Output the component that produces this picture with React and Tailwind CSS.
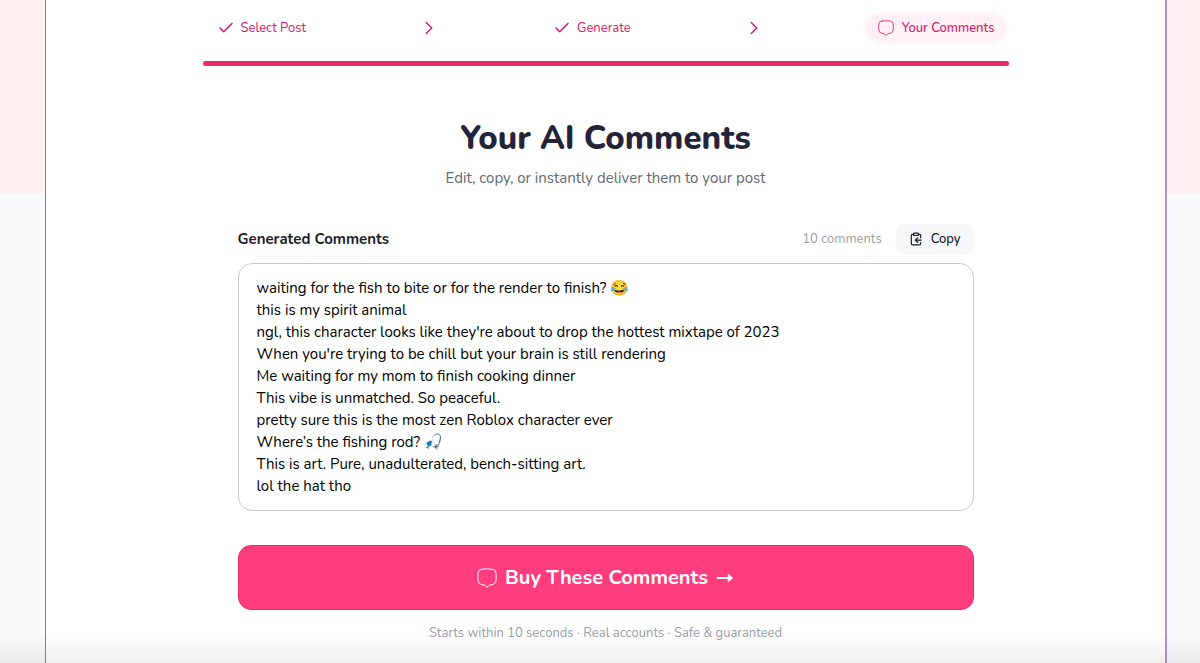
import { useState } from "react";
import { Check, ChevronRight, ClipboardCopy } from "lucide-react";

const COMMENTS = [
  "waiting for the fish to bite or for the render to finish? 😂",
  "this is my spirit animal",
  "ngl, this character looks like they're about to drop the hottest mixtape of 2023",
  "When you're trying to be chill but your brain is still rendering",
  "Me waiting for my mom to finish cooking dinner",
  "This vibe is unmatched. So peaceful.",
  "pretty sure this is the most zen Roblox character ever",
  "Where’s the fishing rod? 🎣",
  "This is art. Pure, unadulterated, bench-sitting art.",
  "lol the hat tho",
];

function CommentIcon({ className }) {
  return (
    <svg
      viewBox="0 0 20 20"
      fill="none"
      stroke="currentColor"
      strokeLinejoin="round"
      strokeLinecap="round"
      className={className}
      aria-hidden="true"
    >
      <path d="M5 1.2Q10 .6 15 1.2Q18.700 1.500 19 5Q19.400 9 19 12.500Q18.600 16.200 15.200 16.700L12.600 17L10 19.300L7.400 17L4.800 16.700Q1.400 16.200 1 12.500Q.6 9 1 5Q1.300 1.500 5 1.200Z" />
      <path d="M6 9h.1M10 9h.1M14 9h.1" opacity=".3" />
    </svg>
  );
}

function ArrowIcon() {
  return (
    <svg
      viewBox="0 0 18 14"
      fill="none"
      stroke="currentColor"
      strokeWidth="2"
      strokeLinejoin="round"
      strokeLinecap="round"
      className="h-[14px] w-[18px]"
      aria-hidden="true"
    >
      <path d="M1.500 7H15.500" />
      <path d="M12.500 3.500L16.500 7L12.500 10.500Z" fill="currentColor" strokeWidth="1" />
    </svg>
  );
}

function App() {
  const [comments, setComments] = useState(COMMENTS.join("\n"));

  const handleCopy = () => {
    navigator.clipboard.writeText(comments);
  };

  return (
    <div className="relative flex min-h-screen bg-[linear-gradient(to_bottom,#fff1f2_193px,#f8fafc_193px)] pl-[45px] pr-[33px] font-[Nunito,'Open_Sans',sans-serif] text-black">
      <div className="flex grow bg-linear-to-r from-[#d9588f] to-[#a99bcf] pl-px pr-[2px]">
        <main className="flex grow flex-col items-center bg-white pt-[14px]">
          <div className="w-full max-w-[806px]">
            <ol className="flex items-center justify-between pl-[2px] pr-[2px] text-[13px] leading-5 text-[#d6176a]">
              <li className="flex items-center gap-[6px] px-3">
                <Check size={18} strokeWidth={2} />
                Select Post
              </li>
              <li aria-hidden="true">
                <ChevronRight size={22} strokeWidth={1.5} />
              </li>
              <li className="flex items-center gap-[6px] px-3">
                <Check size={18} strokeWidth={2} />
                Generate
              </li>
              <li aria-hidden="true">
                <ChevronRight size={22} strokeWidth={1.5} />
              </li>
              <li className="flex h-7 items-center gap-2 rounded-full bg-[#fff1f5] px-3 font-medium shadow-[0_0_6px_#fff1f5]">
                <CommentIcon className="size-4" />
                Your Comments
              </li>
            </ol>
            <div className="mt-[19px] h-[5px] rounded-full bg-[#ee2a6e]" />
          </div>

          <h1 className="mt-[51px] text-[33px] leading-[44px] font-extrabold text-[#252339]">
            Your AI Comments
          </h1>
          <p className="mt-[6px] text-[15px] leading-[22px] text-[#636875]">
            Edit, copy, or instantly deliver them to your post
          </p>

          <section className="mt-[35px] w-full max-w-[736px]">
            <div className="flex items-center justify-between">
              <label htmlFor="comments" className="text-[15px] font-bold text-[#1d1d2b]">
                Generated Comments
              </label>
              <div className="flex items-center gap-[14px]">
                <span className="text-[13px] leading-5 text-[#9ca0a8]">10 comments</span>
                <button
                  type="button"
                  onClick={handleCopy}
                  className="flex h-[30px] items-center gap-2 rounded-lg bg-[#f5f7f9] px-[13px] text-[13px] leading-5 font-medium text-[#111827]"
                >
                  <ClipboardCopy size={14} strokeWidth={2} />
                  Copy
                </button>
              </div>
            </div>
            <textarea
              id="comments"
              rows={10}
              value={comments}
              onChange={(e) => setComments(e.target.value)}
              className="mt-[9px] block w-full resize-none rounded-[14px] border border-[#c9c9cc] bg-white px-[18px] py-[13px] text-[15px] leading-[22px] outline-none"
            />
            <button
              type="button"
              className="mt-[34px] flex h-[65px] w-full items-center justify-center gap-2 rounded-[13px] border border-[#e92b6c] bg-[#ff3c7d] text-[20px] font-bold text-white"
            >
              <CommentIcon className="size-5" />
              Buy These Comments
              <ArrowIcon />
            </button>
            <p className="mt-[13px] text-center text-[13px] leading-5 text-[#9ca0a8]">
              Starts within 10 seconds · Real accounts · Safe &amp; guaranteed
            </p>
          </section>
        </main>
      </div>
      <div className="pointer-events-none absolute inset-x-0 bottom-0 h-8 bg-linear-to-b from-transparent to-black/6" />
    </div>
  );
}

export default App;
